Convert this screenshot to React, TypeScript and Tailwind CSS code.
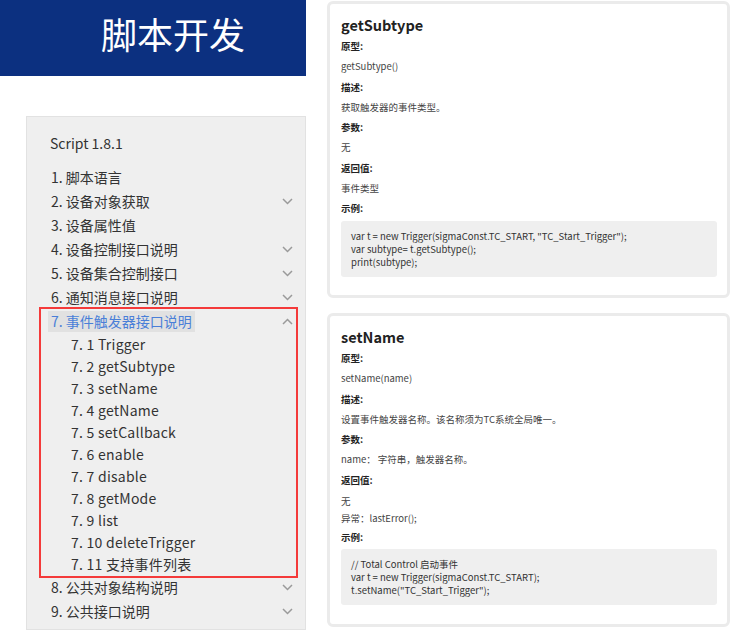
import React from "react";

const FONT = { fontFamily: '"Noto Sans CJK SC", "Noto Sans", sans-serif' };

function Chevron({ up = false }: { up?: boolean }) {
  return (
    <svg width="11" height="7" viewBox="0 0 11 7" className="shrink-0">
      <path
        d={up ? "M1 6 L5.5 1.5 L10 6" : "M1 1 L5.5 5.5 L10 1"}
        fill="none"
        stroke="#9a9a9a"
        strokeWidth="1.5"
      />
    </svg>
  );
}

function NavItem({ label, chevron = false }: { label: string; chevron?: boolean }) {
  return (
    <div className="flex h-[24px] items-center justify-between pl-[24px] pr-[12px] text-[14px] text-[#333]">
      <span>{label}</span>
      {chevron && <Chevron />}
    </div>
  );
}

const subs = [
  "7. 1 Trigger",
  "7. 2 getSubtype",
  "7. 3 setName",
  "7. 4 getName",
  "7. 5 setCallback",
  "7. 6 enable",
  "7. 7 disable",
  "7. 8 getMode",
  "7. 9 list",
  "7. 10 deleteTrigger",
  "7. 11 支持事件列表",
];

function Label({ children }: { children: React.ReactNode }) {
  return <div className="h-[20.3px] text-[9.5px] font-bold leading-[20.3px] text-[#222]">{children}</div>;
}
function Value({ children }: { children: React.ReactNode }) {
  return <div className="h-[20.3px] text-[9.5px] leading-[20.3px] text-[#444]">{children}</div>;
}
function Code({ lines }: { lines: string[] }) {
  return (
    <div className="mr-[10px] rounded-[3px] bg-[#efefef] px-[10px] pb-[8px] pt-[9px] text-[9.5px] leading-[13px] text-[#333]">
      {lines.map((l, i) => (
        <div key={i} className="whitespace-pre">{l}</div>
      ))}
    </div>
  );
}

export default function App() {
  return (
    <div className="flex h-[630px] w-[734px] overflow-hidden bg-white" style={FONT}>
      <div className="flex w-[306px] shrink-0 flex-col">
        <div className="flex h-[76px] items-center bg-[#0c3080] pb-[10px] pl-[101px] text-[36px] text-white">
          脚本开发
        </div>
        <div className="ml-[26px] mt-[40px] flex-1 border border-[#e2e2e2] bg-[#efefef] pt-[14px]">
          <div className="flex h-[24px] items-center pl-[23px] text-[14px] text-[#333]">Script 1.8.1</div>
          <div className="mt-[10px]">
            <NavItem label="1. 脚本语言" />
            <NavItem label="2. 设备对象获取" chevron />
            <NavItem label="3. 设备属性值" />
            <NavItem label="4. 设备控制接口说明" chevron />
            <NavItem label="5. 设备集合控制接口" chevron />
            <NavItem label="6. 通知消息接口说明" chevron />
            <div className="relative">
              <div className="flex h-[24px] items-center justify-between pl-[21px] pr-[12px] text-[14px]">
                <span className="bg-[#e1e1e1] px-[3px] leading-[21px] text-[#4a7fd8]">7. 事件触发器接口说明</span>
                <Chevron up />
              </div>
              {subs.map((s) => (
                <div key={s} className="flex h-[22px] items-center pl-[44px] text-[14px] tracking-[0.25px] text-[#333]">
                  {s}
                </div>
              ))}
              <span className="pointer-events-none absolute left-[12px] right-[7px] top-[-2px] bottom-[-3px] border-[2.5px] border-[#f43a3a]" />
            </div>
            <NavItem label="8. 公共对象结构说明" chevron />
            <NavItem label="9. 公共接口说明" chevron />
          </div>
        </div>
      </div>

      <div className="ml-[21px] flex w-[403px] flex-col">
        <div className="mt-[1px] h-[297px] rounded-[6px] border-[3px] border-[#ebebeb] pl-[11px] pt-[10px]">
          <div className="h-[22px] text-[14.5px] font-bold leading-[22px] text-[#222]">getSubtype</div>
          <Label>原型:</Label>
          <Value>getSubtype()</Value>
          <Label>描述:</Label>
          <Value>获取触发器的事件类型。</Value>
          <Label>参数:</Label>
          <Value>无</Value>
          <Label>返回值:</Label>
          <Value>事件类型</Value>
          <Label>示例:</Label>
          <div className="mt-[2px]">
            <Code
              lines={[
                'var t = new Trigger(sigmaConst.TC_START, "TC_Start_Trigger");',
                "var subtype= t.getSubtype();",
                "print(subtype);",
              ]}
            />
          </div>
        </div>

        <div className="mt-[15px] h-[314px] rounded-[6px] border-[3px] border-[#ebebeb] pl-[11px] pt-[10px]">
          <div className="h-[22px] text-[14.5px] font-bold leading-[22px] text-[#222]">setName</div>
          <Label>原型:</Label>
          <Value>setName(name)</Value>
          <Label>描述:</Label>
          <Value>设置事件触发器名称。该名称须为TC系统全局唯一。</Value>
          <Label>参数:</Label>
          <Value>name： 字符串，触发器名称。</Value>
          <Label>返回值:</Label>
          <div className="pt-[3px] text-[9.5px] leading-[17px] text-[#444]">
            <div>无</div>
            <div>异常：lastError();</div>
          </div>
          <Label>示例:</Label>
          <div className="mt-[2px]">
            <Code
              lines={[
                "// Total Control 启动事件",
                "var t = new Trigger(sigmaConst.TC_START);",
                't.setName("TC_Start_Trigger");',
              ]}
            />
          </div>
        </div>
      </div>
    </div>
  );
}
